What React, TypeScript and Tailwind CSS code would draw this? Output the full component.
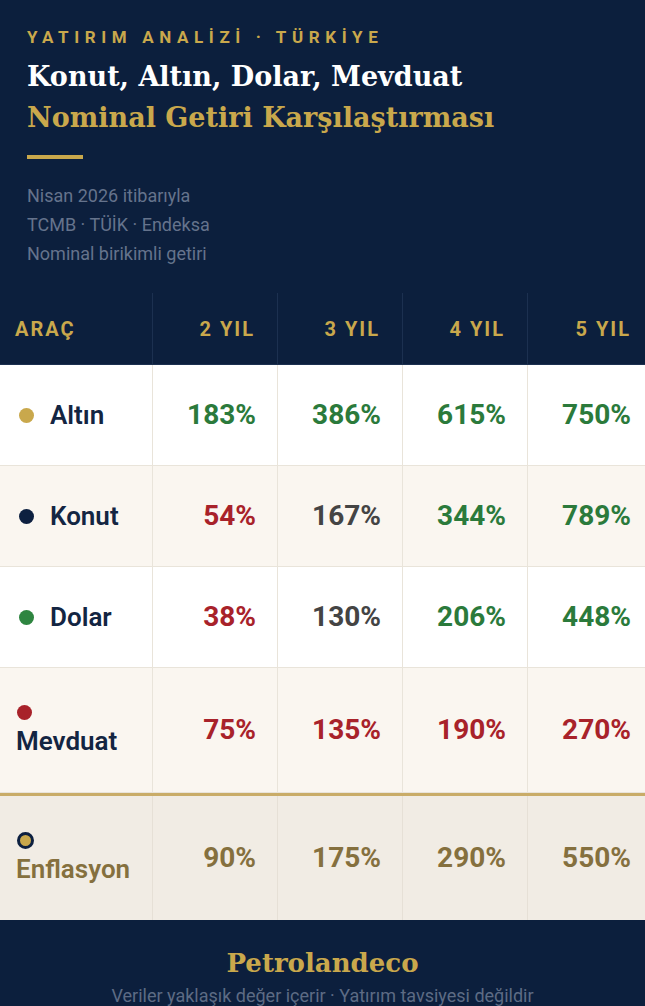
import React from "react";

type Row = {
  name: string;
  dot: string;
  bg: string;
  values: { v: string; c: string }[];
  stacked?: boolean;
};

const GREEN = "text-[#2b7a3b]";
const RED = "text-[#a8222a]";
const GREY = "text-[#444444]";

const rows: Row[] = [
  {
    name: "Altın",
    dot: "bg-[#c9a84c]",
    bg: "bg-white",
    values: [
      { v: "183%", c: GREEN },
      { v: "386%", c: GREEN },
      { v: "615%", c: GREEN },
      { v: "750%", c: GREEN },
    ],
  },
  {
    name: "Konut",
    dot: "bg-[#0d2040]",
    bg: "bg-[#faf6f0]",
    values: [
      { v: "54%", c: RED },
      { v: "167%", c: GREY },
      { v: "344%", c: GREEN },
      { v: "789%", c: GREEN },
    ],
  },
  {
    name: "Dolar",
    dot: "bg-[#2e8540]",
    bg: "bg-white",
    values: [
      { v: "38%", c: RED },
      { v: "130%", c: GREY },
      { v: "206%", c: GREEN },
      { v: "448%", c: GREEN },
    ],
  },
  {
    name: "Mevduat",
    dot: "bg-[#a8222a]",
    bg: "bg-[#faf6f0]",
    stacked: true,
    values: [
      { v: "75%", c: RED },
      { v: "135%", c: RED },
      { v: "190%", c: RED },
      { v: "270%", c: RED },
    ],
  },
];

const serif = "font-['DejaVu_Serif',serif]";
const cols = "grid grid-cols-[152px_125px_125px_125px_1fr]";

export default function App() {
  return (
    <div className="min-h-screen bg-[#0c1f3d] font-['Roboto',sans-serif]">
      {/* header */}
      <div className="px-[27px] pt-[26px] pb-[25px]">
        <div className="text-[17px] leading-[22px] font-bold tracking-[0.33em] text-[#c9a84c]">
          YATIRIM ANALİZİ · TÜRKİYE
        </div>
        <h1 className={`${serif} mt-[8px] text-[27px] leading-[41px] font-bold`}>
          <span className="block text-white">Konut, Altın, Dolar, Mevduat</span>
          <span className="block text-[#c9a84c]">Nominal Getiri Karşılaştırması</span>
        </h1>
        <div className="mt-[17px] h-[4px] w-[56px] bg-[#c9a84c]" />
        <div className="mt-[22px] text-[18px] leading-[29px] text-[#65738c]">
          <div>Nisan 2026 itibarıyla</div>
          <div>TCMB · TÜİK · Endeksa</div>
          <div>Nominal birikimli getiri</div>
        </div>
      </div>

      {/* table */}
      <div>
        <div className={`${cols} h-[72px] border-b border-[#1c3050]`}>
          {["ARAÇ", "2 YIL", "3 YIL", "4 YIL", "5 YIL"].map((h, i) => (
            <div
              key={h}
              className={`flex items-center text-[20px] font-bold tracking-[0.1em] text-[#c9a84c] ${
                i === 0 ? "pl-[15px]" : "justify-end border-l border-[#1c3050]"
              } ${i === 4 ? "pr-[14px]" : i > 0 ? "pr-[22px]" : ""}`}
            >
              {h}
            </div>
          ))}
        </div>

        {rows.map((r) => (
          <div
            key={r.name}
            className={`${cols} ${r.bg} ${r.stacked ? "h-[125px]" : "h-[101px]"} border-b border-[#e9e4da]`}
          >
            <div className={`flex items-center ${r.stacked ? "pl-[16px]" : "pl-[19px]"}`}>
              {r.stacked ? (
                <div className="flex flex-col">
                  <span className={`ml-[1px] h-[15px] w-[15px] rounded-full ${r.dot}`} />
                  <span className="mt-[6px] text-[26px] leading-[30px] font-semibold text-[#132542]">
                    {r.name}
                  </span>
                </div>
              ) : (
                <div className="flex items-center gap-[16px]">
                  <span className={`h-[15px] w-[15px] rounded-full ${r.dot}`} />
                  <span className="text-[26px] leading-[30px] font-semibold text-[#132542]">
                    {r.name}
                  </span>
                </div>
              )}
            </div>
            {r.values.map((v, i) => (
              <div
                key={i}
                className={`flex items-center justify-end border-l border-[#e9e4da] text-[28px] font-bold ${v.c} ${
                  i === 3 ? "pr-[14px]" : "pr-[21px]"
                }`}
              >
                {v.v}
              </div>
            ))}
          </div>
        ))}

        {/* inflation */}
        <div className={`${cols} h-[127px] border-t-[3px] border-[#c9ac68] bg-[#f1ece4]`}>
          <div className="flex items-center pl-[16px]">
            <div className="flex flex-col">
              <span className="ml-[1px] h-[17px] w-[17px] rounded-full border-[3px] border-[#0d2040] bg-[#c9a84c]" />
              <span className="mt-[5px] text-[26px] leading-[30px] font-semibold text-[#85703e]">
                Enflasyon
              </span>
            </div>
          </div>
          {["90%", "175%", "290%", "550%"].map((v, i) => (
            <div
              key={v}
              className={`flex items-center justify-end border-l border-[#e6e0d6] text-[28px] font-bold text-[#85703e] ${
                i === 3 ? "pr-[14px]" : "pr-[21px]"
              }`}
            >
              {v}
            </div>
          ))}
        </div>
      </div>

      {/* footer */}
      <div className="flex flex-col items-center pt-[25px] pb-[10px]">
        <div className={`${serif} text-[26px] leading-[36px] font-bold text-[#c9a84c]`}>
          Petrolandeco
        </div>
        <div className="mt-[4px] text-[18px] leading-[22px] text-[#5d6b84]">
          Veriler yaklaşık değer içerir · Yatırım tavsiyesi değildir
        </div>
      </div>
    </div>
  );
}
